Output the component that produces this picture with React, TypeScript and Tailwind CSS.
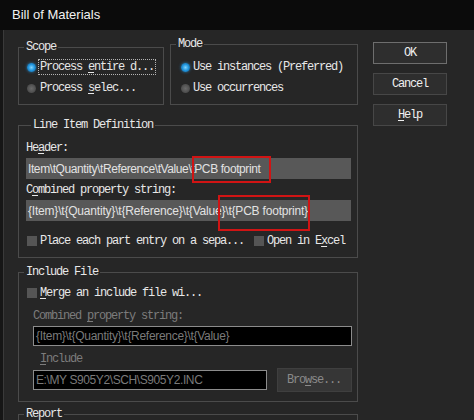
const mono = "font-['Liberation_Mono',monospace] text-[12px] tracking-[-1.2px] leading-[12px]";

function Group({
  label,
  className = "",
  children,
}: {
  label: string;
  className?: string;
  children?: React.ReactNode;
}) {
  return (
    <fieldset className={`border border-[#4b4b4b] ${className}`}>
      <legend className="ml-[5px] px-[2px] leading-[12px] text-[#e8e8e8]">{label}</legend>
      {children}
    </fieldset>
  );
}

function Radio({ on }: { on?: boolean }) {
  return on ? (
    <span className="w-[9px] h-[9px] rounded-full shrink-0 bg-[radial-gradient(circle,#7fd4ff_0%,#1f93dc_50%,#1d5f8c_100%)] shadow-[0_0_3px_#2a7fb8]" />
  ) : (
    <span className="w-[9px] h-[9px] rounded-full shrink-0 bg-[radial-gradient(circle,#6a6a6a_0%,#505050_60%,#3e3e3e_100%)]" />
  );
}

function Check() {
  return <span className="w-[10px] h-[10px] shrink-0 bg-[#555555]" />;
}

function Button({ children, primary }: { children: React.ReactNode; primary?: boolean }) {
  return (
    <div
      className={`h-[22px] flex items-center justify-center bg-[#2e2e2e] border ${
        primary ? "border-[#6e6e6e]" : "border-[#474747]"
      } text-[#f0f0f0]`}
    >
      {children}
    </div>
  );
}

export default function App() {
  return (
    <div className={`w-[474px] h-[420px] overflow-hidden bg-[#262626] relative text-[#e8e8e8] ${mono}`}>
      <div className="h-[30px] bg-[#0b0b0b] flex items-center pl-[12px] font-['Liberation_Sans',sans-serif] text-[13px] tracking-normal text-[#f2f2f2]">
        Bill of Materials
      </div>

      <div className="flex h-[390px] border-l-[3px] border-[#161616]">
        <div className="w-px bg-[#3a3a3a]" />

        <div className="ml-[14px] w-[340px] flex flex-col">
          <div className="flex items-start gap-[6px] mt-[8px]">
            <Group label="Scope" className="w-[146px] mt-[3px] pb-[8px]">
              <div className="mt-[6px] flex flex-col gap-[5px]">
                <div className="h-[16px] flex items-center pl-[8px] gap-[2px]">
                  <Radio on />
                  <span className="border border-dotted border-[#b5b5b5] px-px py-[1px]">
                    Process <u className="underline-offset-2">e</u>ntire d...
                  </span>
                </div>
                <div className="h-[16px] flex items-center pl-[8px] gap-[2px]">
                  <Radio />
                  <span className="border border-transparent px-px">
                    Process <u className="underline-offset-2">s</u>elec...
                  </span>
                </div>
              </div>
            </Group>

            <Group label="Mode" className="w-[188px] pb-[8px]">
              <div className="mt-[9px] flex flex-col gap-[5px]">
                <div className="h-[16px] flex items-center pl-[10px] gap-[3px]">
                  <Radio on />
                  <span>Use instances (Preferred)</span>
                </div>
                <div className="h-[16px] flex items-center pl-[10px] gap-[3px]">
                  <Radio />
                  <span>Use occurrences</span>
                </div>
              </div>
            </Group>
          </div>

          <Group label="Line Item Definition" className="mt-[14px] pb-[8px] pl-[7px]">
            <div className="mt-[11px] h-[12px]">
              He<u className="underline-offset-2">a</u>der:
            </div>
            <div className="mt-[4px] h-[21px] w-[325px] bg-[#585858] flex items-center pl-[2px] font-['Liberation_Sans',sans-serif] text-[12px] tracking-[-0.4px] text-[#e2e2e2] whitespace-nowrap overflow-hidden">
              {"Item\\tQuantity\\tReference\\tValue\\tPCB footprint"}
            </div>
            <div className="mt-[5px] h-[12px]">
              C<u className="underline-offset-2">o</u>mbined property string:
            </div>
            <div className="mt-[4px] h-[21px] w-[325px] bg-[#585858] flex items-center pl-[2px] font-['Liberation_Sans',sans-serif] text-[12px] tracking-[-0.2px] text-[#e2e2e2] whitespace-nowrap overflow-hidden">
              {"{Item}\\t{Quantity}\\t{Reference}\\t{Value}\\t{PCB footprint}"}
            </div>
            <div className="mt-[12px] h-[16px] flex items-center pl-[1px]">
              <Check />
              <span className="ml-[3px]">Place each part entry on a sepa...</span>
              <span className="ml-[10px]">
                <span className="block w-[10px] h-[10px] bg-[#555555]" />
              </span>
              <span className="ml-[3px]">
                Open in E<u className="underline-offset-2">x</u>cel
              </span>
            </div>
          </Group>

          <Group label="Include File" className="mt-[8px] pb-[9px]">
            <div className="mt-[7px] h-[16px] flex items-center pl-[8px] gap-[3px]">
              <Check />
              <span>
                <u className="underline-offset-2">M</u>erge an include file wi...
              </span>
            </div>
            <div className="mt-[9px] h-[12px] pl-[14px] text-[#7c7c7c]">
              Combined <u className="underline-offset-2">p</u>roperty string:
            </div>
            <div className="ml-[14px] mt-[4px] h-[20px] w-[319px] bg-black border border-[#8c8c8c] flex items-center pl-[2px] font-['Liberation_Sans',sans-serif] text-[12px] tracking-[-0.3px] text-[#7a7a7a] whitespace-nowrap overflow-hidden">
              {"{Item}\\t{Quantity}\\t{Reference}\\t{Value}"}
            </div>
            <div className="mt-[7px] h-[12px] pl-[21px] text-[#7c7c7c]">
              <u className="underline-offset-2">I</u>nclude
            </div>
            <div className="mt-[3px] h-[24px] flex items-center pl-[14px]">
              <div className="h-[20px] w-[234px] bg-black border border-[#8c8c8c] flex items-center pl-[2px] font-['Liberation_Sans',sans-serif] text-[12px] tracking-[-0.4px] text-[#7a7a7a] whitespace-nowrap overflow-hidden">
                {"E:\\MY S905Y2\\SCH\\S905Y2.INC"}
              </div>
              <div className="ml-[10px] h-[24px] w-[75px] bg-[#363636] border border-[#3f3f3f] flex items-center pl-[9px] text-[#8a8a8a]">
                Bro<u className="underline-offset-2">w</u>se...
              </div>
            </div>
          </Group>

          <Group label="Report" className="mt-[6px] h-[40px]" />
        </div>

        <div className="ml-[15px] w-[74px] mt-[12px] flex flex-col gap-[9px]">
          <Button primary>OK</Button>
          <Button>Cancel</Button>
          <Button>
            <span>
              <u className="underline-offset-2">H</u>elp
            </span>
          </Button>
        </div>
      </div>

      <div className="absolute left-[192px] top-[156px] w-[79px] h-[27px] border-2 border-[#d01414]" />
      <div className="absolute left-[218px] top-[195px] w-[92px] h-[36px] border-2 border-[#d01414]" />
    </div>
  );
}
